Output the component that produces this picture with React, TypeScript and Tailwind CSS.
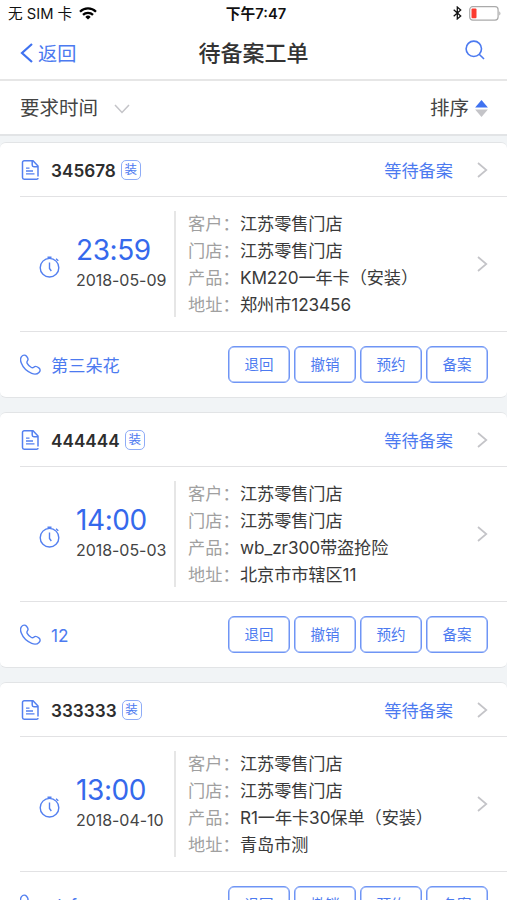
import React from "react";

const orders = [
  {
    id: "345678",
    time: "23:59",
    date: "2018-05-09",
    customer: "江苏零售门店",
    store: "江苏零售门店",
    product: "KM220一年卡（安装）",
    address: "郑州市123456",
    contact: "第三朵花",
  },
  {
    id: "444444",
    time: "14:00",
    date: "2018-05-03",
    customer: "江苏零售门店",
    store: "江苏零售门店",
    product: "wb_zr300带盗抢险",
    address: "北京市市辖区11",
    contact: "12",
  },
  {
    id: "333333",
    time: "13:00",
    date: "2018-04-10",
    customer: "江苏零售门店",
    store: "江苏零售门店",
    product: "R1一年卡30保单（安装）",
    address: "青岛市测",
    contact: "dsf",
  },
];

const actions = ["退回", "撤销", "预约", "备案"];

const ChevronRight = () => (
  <svg className="w-[11px] h-4 shrink-0" viewBox="0 0 11 16" fill="none" stroke="#c4c4c8" strokeWidth="1.7">
    <path d="M1 1l8.3 7L1 15" />
  </svg>
);

const StatusBar = () => (
  <div className="flex items-center h-7 pl-2 pr-1.5 text-[#111]">
    <div className="flex flex-1 items-center gap-[7px]">
      <span className="mt-px text-[14.7px]">无 SIM 卡</span>
      <svg className="w-[18px] h-[13px] -mt-px" viewBox="0 0 18 13" fill="none" stroke="#000" strokeWidth="2.3">
        <path d="M1 4.7a11.4 11.4 0 0 1 16 0" />
        <path d="M4 7.9a7.1 7.1 0 0 1 10 0" />
        <path d="M9 12.6L6.3 9.9a3.8 3.8 0 0 1 5.4 0z" fill="#000" stroke="none" />
      </svg>
    </div>
    <span className="mt-px ml-[3px] text-[14.7px] font-semibold">下午7:47</span>
    <div className="flex flex-1 items-center justify-end gap-[7px] -mt-0.5">
      <svg className="w-[9px] h-[14px]" viewBox="0 0 9 14" fill="none" stroke="#111" strokeWidth="1.3">
        <path d="M.7 3.7l7 6.2-3.4 3V1.1l3.4 3-7 6.2" />
      </svg>
      <svg className="w-8 h-[15px]" viewBox="0 0 32 15" fill="none">
        <rect x=".7" y=".7" width="28.4" height="13.4" rx="3" stroke="#aaa" strokeWidth="1.2" />
        <rect x="2.5" y="2.5" width="5" height="9.8" rx="1" fill="#fb3b30" />
        <path d="M30.3 5.2c1.5.8 1.5 3.6 0 4.4z" fill="#aaa" />
      </svg>
    </div>
  </div>
);

const OrderCard = ({ order }: { order: (typeof orders)[number] }) => {
  const rows = [
    ["客户", order.customer],
    ["门店", order.store],
    ["产品", order.product],
    ["地址", order.address],
  ];

  return (
    <div className="h-[256px] shrink-0 bg-white rounded-md border-y border-[#e2e4e6] pl-5">
      <div className="flex items-center h-[54px] pr-[19px] border-b border-[#e2e2e4]">
        <svg className="w-5 h-[22px] shrink-0" viewBox="0 0 20 22" fill="none" stroke="#5480f0" strokeWidth="1.5">
          <path d="M18 17.5V7l-5-5.200H4.200a1.700 1.700 0 0 0-1.700 1.700v15c0 1 .8 1.700 1.700 1.700h12.300c.9 0 1.500-.5 1.500-1.300" />
          <path d="M12.200 2v4c0 1 .7 1.700 1.700 1.700H18" />
          <path d="M6 9.200h3.500M6 12h7M6 14.800h8.500" strokeWidth="1.3" />
        </svg>
        <span className="mt-[3px] ml-[11px] text-[17.2px] font-semibold text-[#2d2d2d]">{order.id}</span>
        <span className="flex items-center justify-center w-5 h-5 ml-[5px] pt-0.5 rounded-[5px] border border-[#8eacf7] text-[12.5px] leading-none text-[#4c7af0]">
          装
        </span>
        <span className="mt-[3px] ml-auto mr-6 text-[17.2px] text-[#4c7af0]">等待备案</span>
        <ChevronRight />
      </div>

      <div className="flex items-center h-[134px] pr-[19px]">
        <svg className="w-[22px] h-[22px] ml-[18px] mt-[5px] shrink-0" viewBox="0 0 22 22" fill="none" stroke="#5480f0" strokeWidth="1.4">
          <circle cx="11.5" cy="11.7" r="9.3" />
          <path d="M11.5 6.5v6l1.800 2.500M9.500 1.200h4M18 2.800l2.300 2" />
        </svg>
        <div className="w-[98px] -mt-[5px] ml-4 shrink-0">
          <div className="text-[28px] leading-9 tracking-[-0.4px] text-[#3569ec]">{order.time}</div>
          <div className="text-[16px] leading-6 tracking-[-0.05px] text-[#444]">{order.date}</div>
        </div>
        <div className="h-[106px] pl-3 border-l-2 border-[#e6e6e6]">
          <div className="-mt-px">
            {rows.map(([label, value]) => (
              <div key={label} className="flex h-[27px] leading-[27px] text-[17.2px] whitespace-nowrap">
                <span className="w-[52px] text-[#a0a0a0]">{label}：</span>
                <span className="tracking-[-0.1px] text-[#3a3a3a]">{value}</span>
              </div>
            ))}
          </div>
        </div>
        <div className="ml-auto">
          <ChevronRight />
        </div>
      </div>

      <div className="flex items-center h-[66px] pr-[19px] border-t border-[#e2e2e4]">
        <svg className="w-[21px] h-[21px] -mt-px shrink-0" viewBox="0 0 21 21" fill="none" stroke="#5480f0" strokeWidth="1.4">
          <path d="M1.5 2.600C3 .8 5.200.6 6.500 2.200c1.200 1.500 2.300 2.700 1.200 4.200-.8 1.100-1.200 1.700-.5 2.900 1 1.800 2.400 3.200 4.200 4.200 1.200.7 1.800.2 2.800-.6 1.400-1.200 2.900-.3 4.600 1 1.700 1.300 1.700 3 .2 4.500-1.700 1.800-4.300 2.200-7.300 1C6.700 17.300 3 13.600 1.300 9.100.3 6.500.3 4.100 1.500 2.600z" />
        </svg>
        <span className="mt-0.5 ml-2.5 text-[17.2px] text-[#4c7af0]">{order.contact}</span>
        <div className="flex gap-1 ml-auto -mt-px">
          {actions.map((action) => (
            <button
              key={action}
              className="w-[62px] h-[37px] pt-0.5 rounded-md border border-[#6f95f5] text-[14.5px] text-[#4c7af0] shadow-[inset_0_0_0_0.5px_#6f95f5]"
            >
              {action}
            </button>
          ))}
        </div>
      </div>
    </div>
  );
};

const App = () => {
  return (
    <div className="flex flex-col w-full h-[900px] overflow-hidden bg-[#f1f4f6] font-['Inter','Noto_Sans_CJK_SC',sans-serif]">
      <div className="bg-white shrink-0">
        <StatusBar />
        <div className="flex items-center h-[53px] px-5 border-b-2 border-[#e6e6e6]">
          <div className="flex flex-1 items-center gap-[5px] text-[19.2px] text-[#4c7af0]">
            <svg className="w-[13px] h-5" viewBox="0 0 13 20" fill="none" stroke="#3f72f0" strokeWidth="2.2">
              <path d="M12 1L2 10l10 9" />
            </svg>
            <span className="mt-px">返回</span>
          </div>
          <h1 className="text-[22px] font-medium text-[#333]">待备案工单</h1>
          <div className="flex flex-1 justify-end">
            <svg className="w-5 h-5 -mt-[7px] mr-0.5" viewBox="0 0 20 20" fill="none" stroke="#4c7af0" strokeWidth="1.6">
              <circle cx="8.8" cy="8.8" r="7.7" />
              <path d="M14.2 14.2l4.8 4.8" />
            </svg>
          </div>
        </div>
        <div className="flex items-center justify-between h-[55px] pl-5 pr-[19px] border-b-2 border-[#e2e4e6] text-[19.5px] text-[#444]">
          <div className="flex items-center gap-4">
            <span className="mt-[3px]">要求时间</span>
            <svg className="w-4 h-2.5 mt-[3px]" viewBox="0 0 16 10" fill="none" stroke="#c4c4c8" strokeWidth="1.5">
              <path d="M1 1l7 7.5L15 1" />
            </svg>
          </div>
          <div className="flex items-center gap-[6px]">
            <span className="mt-[3px]">排序</span>
            <svg className="w-[13px] h-[17px] mt-px" viewBox="0 0 12 16">
              <path d="M6 0l6 7H0z" fill="#3f72f0" />
              <path d="M0 9h12L6 16z" fill="#c4c4c8" />
            </svg>
          </div>
        </div>
      </div>

      <div className="flex flex-col gap-3.5 pt-1.5">
        {orders.map((order) => (
          <OrderCard key={order.id} order={order} />
        ))}
      </div>
    </div>
  );
};

export default App;
